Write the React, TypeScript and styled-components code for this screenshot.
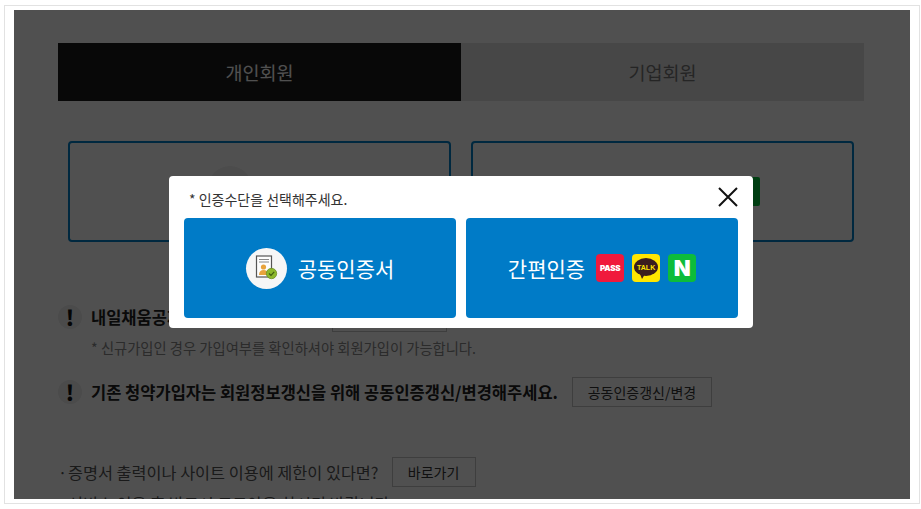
import { FC } from 'react'
import styled, { createGlobalStyle } from 'styled-components'

const GlobalStyle = createGlobalStyle`
  html, body {
    margin: 0;
    background: #ffffff;
    font-family: "Noto Sans CJK KR", "Noto Sans", sans-serif;
    color: #333333;
  }
  * {
    box-sizing: border-box;
  }
`

const Frame = styled.div`
  width: 916px;
  height: 499px;
  margin: 5px 0 0 4px;
  padding: 4px 9px 4px 9px;
  border: 1px solid #e2e2e2;
`

const Viewport = styled.div`
  position: relative;
  width: 896px;
  height: 489px;
  overflow: hidden;
  background: #ffffff;
`

const Content = styled.div`
  display: flex;
  flex-direction: column;
  padding: 33px 46px 0 44px;
`

const Tabs = styled.div`
  display: flex;
  height: 58px;
`

const Tab = styled.div<{ $active?: boolean }>`
  flex: 0 0 403px;
  display: flex;
  align-items: center;
  justify-content: center;
  font-size: 18.5px;
  background: ${({ $active }) => ($active ? '#1a1a1a' : '#e2e2e2')};
  color: ${({ $active }) => ($active ? '#ffffff' : '#777777')};
`

const Cards = styled.div`
  display: flex;
  gap: 20px;
  margin: 40px 0 0 10px;
`

const Card = styled.div`
  width: 383px;
  height: 101px;
  border: 2px solid #0080c8;
  border-radius: 4px;
  display: flex;
  align-items: flex-start;
  justify-content: center;
  padding-top: 23px;
`

const CardCircle = styled.div`
  width: 44px;
  height: 44px;
  margin-right: 60px;
  border-radius: 50%;
  background: #f1f1f1;
`

const GreenButton = styled.div`
  width: 60px;
  height: 29px;
  margin: 11px 0 0 135px;
  border-radius: 2px;
  background: #00c73c;
`

const Notice = styled.div<{ $top: number }>`
  display: flex;
  align-items: center;
  height: 30px;
  margin-top: ${({ $top }) => $top}px;
`

const Mark = styled.span`
  flex: 0 0 24px;
  height: 24px;
  margin-right: 9px;
  border-radius: 50%;
  background: #eeeeee;
  color: #111111;
  font-size: 21px;
  font-weight: 900;
  line-height: 24px;
  text-align: center;
`

const Strong = styled.strong<{ $width?: number }>`
  flex: 0 0 ${({ $width }) => ($width ? `${$width}px` : 'auto')};
  font-size: 16.5px;
  font-weight: 700;
  color: #222222;
  white-space: nowrap;
`

const OutlineButton = styled.span<{ $width: number; $left?: number }>`
  flex: 0 0 ${({ $width }) => $width}px;
  height: 30px;
  margin-left: ${({ $left }) => $left ?? 0}px;
  border: 1px solid #c4c4c4;
  color: #333333;
  font-size: 14px;
  line-height: 28px;
  text-align: center;
`

const Note = styled.p`
  margin: 6px 0 0 33px;
  font-size: 14.3px;
  line-height: 20px;
  color: #888888;
  white-space: nowrap;
`

const Help = styled.div`
  display: flex;
  align-items: center;
  height: 30px;
  margin-top: 50px;
  font-size: 16.3px;
  color: #555555;
  white-space: nowrap;
`

const Bullet = styled.span`
  flex: 0 0 10px;
`

const HelpText = styled.span`
  margin-right: 13px;
`

const HelpLine = styled.p`
  display: flex;
  margin: 4px 0 0;
  font-size: 16.3px;
  line-height: 24px;
  color: #555555;
  white-space: nowrap;
`

const Overlay = styled.div`
  position: absolute;
  inset: 0;
  background: rgba(0, 0, 0, 0.685);
`

const Modal = styled.div`
  position: absolute;
  left: 155px;
  top: 166px;
  width: 584px;
  height: 152px;
  padding: 13px 15px 10px;
  border-radius: 4px;
  background: #ffffff;
`

const ModalTitle = styled.p`
  margin: 0 0 9px 5px;
  font-size: 14px;
  line-height: 20px;
  color: #333333;
`

const CloseButton = styled.button`
  position: absolute;
  top: 10px;
  right: 14px;
  width: 22px;
  height: 22px;
  padding: 0;
  border: 0;
  background: none;
  color: #111111;
`

const Choices = styled.div`
  display: flex;
  gap: 10px;
`

const Choice = styled.div`
  flex: 0 0 272px;
  height: 100px;
  display: flex;
  align-items: center;
  justify-content: center;
  border-radius: 4px;
  background: #007bc7;
  color: #ffffff;
  font-size: 21px;
`

const CertBadge = styled.span`
  width: 41px;
  height: 41px;
  margin-right: 11px;
  display: flex;
  align-items: center;
  justify-content: center;
  border-radius: 50%;
  background: #f6f6f6;
`

const Logos = styled.span`
  display: flex;
  gap: 8px;
  margin-left: 11px;
`

const LogoTile = styled.span<{ $bg: string; $size: number }>`
  width: 28px;
  height: 28px;
  display: flex;
  align-items: center;
  justify-content: center;
  border-radius: 4px;
  background: ${({ $bg }) => $bg};
  color: #ffffff;
  font-family: Inter, "Liberation Sans", sans-serif;
  font-size: ${({ $size }) => $size}px;
  font-weight: 900;
  letter-spacing: -0.2px;
`

const TalkBubble = styled.span`
  position: relative;
  width: 24px;
  height: 18px;
  margin-top: -2px;
  display: flex;
  align-items: center;
  justify-content: center;
  border-radius: 50%;
  background: #3b1e1e;
  color: #ffe600;
  font-family: "Liberation Sans", sans-serif;
  font-size: 7px;
  font-weight: 700;
  letter-spacing: 0;
  &::after {
    content: '';
    position: absolute;
    left: 6px;
    bottom: -3px;
    width: 0;
    height: 0;
    border-left: 2px solid transparent;
    border-right: 3px solid transparent;
    border-top: 5px solid #3b1e1e;
  }
`

const CertIcon: FC = () => (
  <svg width="24" height="26" viewBox="0 0 24 26">
    <rect x="2.5" y="1" width="15" height="21" fill="#fdfdfd" stroke="#555" strokeWidth="1.2" />
    <path d="M5 4.5h10M5 7h10" stroke="#888" strokeWidth="1" />
    <circle cx="9.5" cy="12" r="2.6" fill="#e8a33c" />
    <path d="M5 20c0-3.5 1.8-5 4.5-5s4.5 1.5 4.5 5z" fill="#e8a33c" />
    <circle cx="17.5" cy="18.5" r="5.2" fill="#8cb82b" stroke="#6d8f24" strokeWidth="0.8" />
    <path d="M15 18.5l2 2 3.2-3.6" fill="none" stroke="#3f5c10" strokeWidth="1.2" />
  </svg>
)

const App: FC = () => {
  return (
    <>
      <GlobalStyle />
      <Frame>
        <Viewport>
          <Content>
            <Tabs>
              <Tab $active>개인회원</Tab>
              <Tab>기업회원</Tab>
            </Tabs>
            <Cards>
              <Card>
                <CardCircle />
              </Card>
              <Card>
                <GreenButton />
              </Card>
            </Cards>
            <Notice $top={60}>
              <Mark>!</Mark>
              <Strong $width={241}>내일채움공제 회원가입을 해주세요.</Strong>
              <OutlineButton $width={115}>회원가입</OutlineButton>
            </Notice>
            <Note>* 신규가입인 경우 가입여부를 확인하셔야 회원가입이 가능합니다.</Note>
            <Notice $top={19}>
              <Mark>!</Mark>
              <Strong>기존 청약가입자는 회원정보갱신을 위해 공동인증갱신/변경해주세요.</Strong>
              <OutlineButton $width={140} $left={14}>공동인증갱신/변경</OutlineButton>
            </Notice>
            <Help>
              <Bullet>·</Bullet>
              <HelpText>증명서 출력이나 사이트 이용에 제한이 있다면?</HelpText>
              <OutlineButton $width={84}>바로가기</OutlineButton>
            </Help>
            <HelpLine>
              <Bullet>·</Bullet>
              서비스 이용 후 반드시 로그아웃 하시기 바랍니다.
            </HelpLine>
          </Content>
          <Overlay />
          <Modal>
            <ModalTitle>* 인증수단을 선택해주세요.</ModalTitle>
            <CloseButton aria-label="닫기">
              <svg width="22" height="22" viewBox="0 0 22 22">
                <path d="M2 2l18 18M20 2L2 20" stroke="currentColor" strokeWidth="2" fill="none" />
              </svg>
            </CloseButton>
            <Choices>
              <Choice>
                <CertBadge>
                  <CertIcon />
                </CertBadge>
                공동인증서
              </Choice>
              <Choice>
                간편인증
                <Logos>
                  <LogoTile $bg="#f0193c" $size={8}>PASS</LogoTile>
                  <LogoTile $bg="#ffe600" $size={7}>
                    <TalkBubble>TALK</TalkBubble>
                  </LogoTile>
                  <LogoTile $bg="#0dbc3a" $size={22}>N</LogoTile>
                </Logos>
              </Choice>
            </Choices>
          </Modal>
        </Viewport>
      </Frame>
    </>
  )
}

export default App
